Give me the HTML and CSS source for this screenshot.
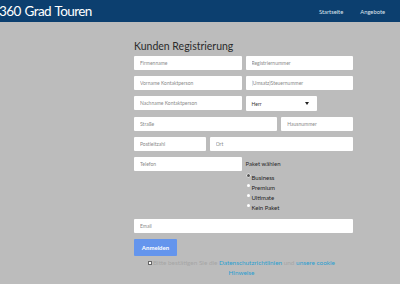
FILE: index.html
```html
<!DOCTYPE html>
<html lang="de">
<head>
    <meta charset="UTF-8">
    <meta name="viewport" content="width=device-width, initial-scale=1.0">
    <title>360 Grad Touren - Registrierung</title>
    <link rel="stylesheet" href="styles.css">
</head>
<body>
    <header class="topbar">
        <div class="brand">360 Grad Touren</div>
        <nav class="nav">
            <a href="#">Startseite</a>
            <a href="#">Angebote</a>
            <a href="#">Buchen</a>
        </nav>
    </header>

    <main class="page">
        <form class="register">
            <h2>Kunden Registrierung</h2>

            <div class="row half">
                <input type="text" placeholder="Firmenname">
                <input type="text" placeholder="Registriernummer">
            </div>
            <div class="row half">
                <input type="text" placeholder="Vorname Kontaktperson">
                <input type="text" placeholder="(Umsatz)Steuernummer">
            </div>
            <div class="row half">
                <input type="text" placeholder="Nachname Kontaktperson">
                <div class="select">
                    <span>Herr</span>
                    <span class="caret"></span>
                </div>
            </div>
            <div class="row wide-left">
                <input type="text" placeholder="Straße">
                <input type="text" placeholder="Hausnummer">
            </div>
            <div class="row wide-right">
                <input type="text" placeholder="Postleitzahl">
                <input type="text" placeholder="Ort">
            </div>
            <div class="row half top">
                <input type="text" placeholder="Telefon">
                <div class="package">
                    <div class="package-title">Paket wählen</div>
                    <label><input type="radio" name="paket" checked> Business</label>
                    <label><input type="radio" name="paket"> Premium</label>
                    <label><input type="radio" name="paket"> Ultimate</label>
                    <label><input type="radio" name="paket"> Kein Paket</label>
                </div>
            </div>
            <div class="row">
                <input type="email" placeholder="Email">
            </div>

            <button type="button" class="submit">Anmelden</button>

            <p class="consent">
                <input type="checkbox">Bitte bestätigen Sie die <a href="#">Datenschutzrichtlinien</a> und <a href="#">unsere cookie</a><br><a href="#">Hinweise</a>
            </p>
        </form>
    </main>
</body>
</html>
```

FILE: styles.css
```css
* {
    margin: 0;
    padding: 0;
    box-sizing: border-box;
}

body {
    font-family: 'Lato', 'Open Sans', sans-serif;
    background: #bcbcbc;
    color: #333333;
    width: 400px;
    height: 284px;
    overflow: hidden;
}

.topbar {
    height: 22px;
    background: #0c3f6f;
    display: flex;
    align-items: center;
    white-space: nowrap;
    overflow: hidden;
}

.brand {
    flex: 0 0 320px;
    color: #ffffff;
    font-size: 13.5px;
    letter-spacing: -0.6px;
    word-spacing: 1px;
    margin-left: -1px;
}

.nav {
    display: flex;
    gap: 17px;
    padding-top: 1px;
}

.nav a {
    color: #dfe6ee;
    font-size: 5.8px;
    text-decoration: none;
}

.page {
    padding: 18px 0 0 134px;
}

.register {
    width: 219px;
}

.register h2 {
    font-size: 10.5px;
    font-weight: 400;
    color: #2b2b2b;
    line-height: 13px;
    margin-bottom: 3px;
}

.row {
    display: grid;
    grid-template-columns: 1fr;
    gap: 4px;
    margin-bottom: 6px;
}

.row.half {
    grid-template-columns: 1fr 1fr;
}

.row.wide-left {
    grid-template-columns: 2fr 1fr;
    margin-top: 1px;
}

.row.wide-right {
    grid-template-columns: 1fr 2fr;
}

.row.top {
    align-items: start;
    margin-bottom: 7px;
}

.row input[type="text"],
.row input[type="email"] {
    width: 100%;
    min-width: 0;
    height: 14px;
    border: none;
    border-radius: 1px;
    background: #ffffff;
    padding: 0 6px;
    font-family: inherit;
    font-size: 5px;
    outline: none;
}

.row input::placeholder {
    color: #8a8a8a;
}

.select {
    width: 71px;
    height: 15px;
    background: #ffffff;
    border-radius: 1px;
    display: flex;
    align-items: center;
    justify-content: space-between;
    padding: 0 8px 0 6px;
    font-size: 5px;
    color: #333333;
}

.caret {
    width: 0;
    height: 0;
    border-left: 2.5px solid transparent;
    border-right: 2.5px solid transparent;
    border-top: 3px solid #222222;
}

.package {
    padding-top: 3px;
    font-size: 6px;
    color: #222222;
}

.package-title {
    font-size: 6px;
    color: #2b2b2b;
    margin-bottom: 5px;
}

.package label {
    display: flex;
    align-items: center;
    gap: 2px;
    height: 10px;
}

.package input[type="radio"] {
    width: 3px;
    height: 3px;
    margin: 0 0 3px 1px;
    appearance: none;
    background: #ffffff;
    border-radius: 50%;
}

.package input[type="radio"]:checked {
    background: #555555;
    box-shadow: 0 0 0 0.5px #ffffff;
}

.submit {
    display: block;
    width: 43px;
    height: 17px;
    background: #6495ed;
    color: #ffffff;
    border: none;
    border-radius: 1px;
    font-family: inherit;
    font-size: 6px;
    font-weight: 700;
}

.consent {
    margin-top: 2px;
    font-size: 6.4px;
    line-height: 10px;
    color: #a6a6a6;
    text-align: center;
    padding: 0 8px 0 4px;
}

.consent input[type="checkbox"] {
    width: 4px;
    height: 4px;
    margin-right: 1px;
    vertical-align: 0;
    appearance: none;
    background: #ffffff;
    border: 0.5px solid #666666;
}

.consent a {
    color: #2b9fd1;
    text-decoration: none;
}
```
